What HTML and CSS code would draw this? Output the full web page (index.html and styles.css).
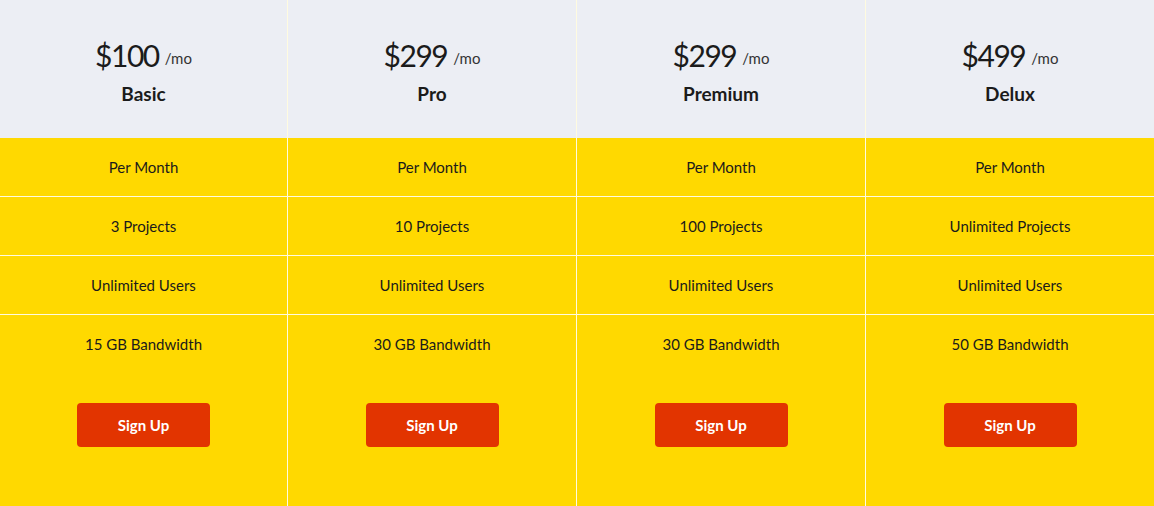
FILE: index.html
```html
<!DOCTYPE html>
<html>
<head>
<meta charset="utf-8">
<link rel="stylesheet" href="styles.css">
</head>
<body>
<div class="pricing">
  <div class="plan">
    <div class="plan-head">
      <div class="price"><span class="amount">$100</span><span class="per">/mo</span></div>
      <div class="name">Basic</div>
    </div>
    <div class="feature">Per Month</div>
    <div class="feature">3 Projects</div>
    <div class="feature">Unlimited Users</div>
    <div class="feature last">15 GB Bandwidth</div>
    <div class="action"><a class="btn">Sign Up</a></div>
  </div>
  <div class="plan">
    <div class="plan-head">
      <div class="price"><span class="amount">$299</span><span class="per">/mo</span></div>
      <div class="name">Pro</div>
    </div>
    <div class="feature">Per Month</div>
    <div class="feature">10 Projects</div>
    <div class="feature">Unlimited Users</div>
    <div class="feature last">30 GB Bandwidth</div>
    <div class="action"><a class="btn">Sign Up</a></div>
  </div>
  <div class="plan">
    <div class="plan-head">
      <div class="price"><span class="amount">$299</span><span class="per">/mo</span></div>
      <div class="name">Premium</div>
    </div>
    <div class="feature">Per Month</div>
    <div class="feature">100 Projects</div>
    <div class="feature">Unlimited Users</div>
    <div class="feature last">30 GB Bandwidth</div>
    <div class="action"><a class="btn">Sign Up</a></div>
  </div>
  <div class="plan">
    <div class="plan-head">
      <div class="price"><span class="amount">$499</span><span class="per">/mo</span></div>
      <div class="name">Delux</div>
    </div>
    <div class="feature">Per Month</div>
    <div class="feature">Unlimited Projects</div>
    <div class="feature">Unlimited Users</div>
    <div class="feature last">50 GB Bandwidth</div>
    <div class="action"><a class="btn">Sign Up</a></div>
  </div>
</div>
</body>
</html>
```

FILE: styles.css
```css
html, body {
  margin: 0;
  padding: 0;
}
body {
  font-family: "Lato", "Noto Sans", sans-serif;
  color: #1b1b1b;
  background: #ffd900;
}
.pricing {
  display: grid;
  grid-template-columns: 288px 289px 289px 1fr;
  height: 506px;
}
.plan {
  display: flex;
  flex-direction: column;
  background: #ffd900;
  border-right: 1px solid #fffbe0;
}
.plan:last-child {
  border-right: none;
}
.plan-head {
  height: 138px;
  background: #eceef4;
  display: flex;
  flex-direction: column;
  align-items: center;
  padding-top: 37px;
  box-sizing: border-box;
}
.price {
  display: flex;
  align-items: baseline;
  line-height: 36px;
}
.amount {
  font-size: 30px;
  letter-spacing: -1.5px;
  font-weight: 400;
}
.per {
  font-size: 15px;
  margin-left: 6px;
  color: #333;
  position: relative;
  top: -3px;
}
.name {
  margin-top: 3px;
  font-size: 19px;
  font-weight: 700;
  line-height: 24px;
}
.feature {
  height: 58px;
  border-bottom: 1px solid #fffbe0;
  display: flex;
  align-items: center;
  justify-content: center;
  font-size: 15px;
}
.feature.last {
  border-bottom: none;
  height: 58px;
}
.action {
  display: flex;
  justify-content: center;
  padding-top: 30px;
}
.btn {
  display: flex;
  align-items: center;
  justify-content: center;
  width: 133px;
  height: 44px;
  background: #e23400;
  color: #fff;
  border-radius: 4px;
  font-size: 15px;
  font-weight: 700;
}
```
